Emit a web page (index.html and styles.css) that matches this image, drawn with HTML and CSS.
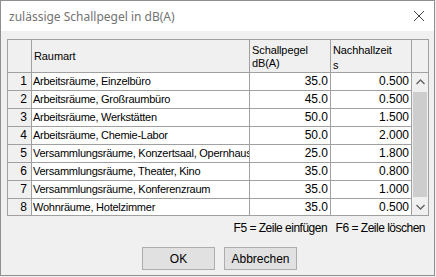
FILE: index.html
```html
<!DOCTYPE html>
<html>
<head>
<meta charset="utf-8">
<link rel="stylesheet" href="styles.css">
</head>
<body>
<div class="window">
  <div class="titlebar">
    <span class="title">zulässige Schallpegel in dB(A)</span>
    <svg class="close" width="12" height="12" viewBox="0 0 12 12"><path d="M1 1L11 11M11 1L1 11" stroke="#444" stroke-width="1" fill="none"/></svg>
  </div>
  <div class="content">
    <div class="grid">
      <div class="head">
        <div class="hc c0"></div>
        <div class="hc c1 mid">Raumart</div>
        <div class="hc c2">Schallpegel<br>dB(A)</div>
        <div class="hc c3">Nachhallzeit<br><span class="unit">s</span></div>
        <div class="hc c4"></div>
      </div>
      <div class="bodyarea">
        <div class="rows">
          <div class="row"><div class="rh">1</div><div class="cell c1">Arbeitsräume, Einzelbüro</div><div class="cell c2 num">35.0</div><div class="cell c3 num">0.500</div></div>
          <div class="row"><div class="rh">2</div><div class="cell c1">Arbeitsräume, Großraumbüro</div><div class="cell c2 num">45.0</div><div class="cell c3 num">0.500</div></div>
          <div class="row"><div class="rh">3</div><div class="cell c1">Arbeitsräume, Werkstätten</div><div class="cell c2 num">50.0</div><div class="cell c3 num">1.500</div></div>
          <div class="row"><div class="rh">4</div><div class="cell c1">Arbeitsräume, Chemie-Labor</div><div class="cell c2 num">50.0</div><div class="cell c3 num">2.000</div></div>
          <div class="row"><div class="rh">5</div><div class="cell c1">Versammlungsräume, Konzertsaal, Opernhaus</div><div class="cell c2 num">25.0</div><div class="cell c3 num">1.800</div></div>
          <div class="row"><div class="rh">6</div><div class="cell c1">Versammlungsräume, Theater, Kino</div><div class="cell c2 num">35.0</div><div class="cell c3 num">0.800</div></div>
          <div class="row"><div class="rh">7</div><div class="cell c1">Versammlungsräume, Konferenzraum</div><div class="cell c2 num">35.0</div><div class="cell c3 num">1.000</div></div>
          <div class="row"><div class="rh">8</div><div class="cell c1">Wohnräume, Hotelzimmer</div><div class="cell c2 num">35.0</div><div class="cell c3 num">0.500</div></div>
        </div>
        <div class="scrollbar">
          <div class="sbtn"><svg width="9" height="6" viewBox="0 0 9 6"><path d="M0.5 5L4.5 1L8.5 5" stroke="#606060" stroke-width="1.3" fill="none"/></svg></div>
          <div class="track"><div class="thumb"></div></div>
          <div class="sbtn"><svg width="9" height="6" viewBox="0 0 9 6"><path d="M0.5 1L4.5 5L8.5 1" stroke="#606060" stroke-width="1.3" fill="none"/></svg></div>
        </div>
      </div>
    </div>
    <div class="hint">F5 = Zeile einfügen&nbsp;&nbsp;&nbsp;F6 = Zeile löschen</div>
    <div class="buttons">
      <button class="btn">OK</button>
      <button class="btn">Abbrechen</button>
    </div>
  </div>
</div>
</body>
</html>
```

FILE: styles.css
```css
html, body {
  margin: 0;
  padding: 0;
  background: #f0f0f0;
}
body {
  width: 436px;
  height: 277px;
  overflow: hidden;
}
.window {
  box-sizing: border-box;
  width: 435px;
  height: 276px;
  border: 1px solid #8f8f8f;
  background: #f0f0f0;
  display: flex;
  flex-direction: column;
}
.titlebar {
  height: 30px;
  background: #ffffff;
  display: flex;
  align-items: center;
  justify-content: space-between;
  padding: 0 9px 0 8px;
  flex: none;
}
.title {
  font-family: "Noto Sans", "Open Sans", sans-serif;
  font-size: 12px;
  color: #737373;
}
.close {
  display: block;
}
.content {
  flex: 1;
  display: flex;
  flex-direction: column;
  padding: 8px 6px 0 6px;
  font-family: "Liberation Sans", Arial, sans-serif;
  font-size: 11px;
  color: #000;
}
.grid {
  box-sizing: border-box;
  width: 422px;
  height: 177px;
  border: 1px solid #a0a0a0;
  background: #f0f0f0;
  display: flex;
  flex-direction: column;
  overflow: hidden;
}
.head {
  display: flex;
  height: 33px;
  flex: none;
}
.hc {
  box-sizing: border-box;
  height: 33px;
  border-right: 1px solid #a0a0a0;
  border-bottom: 1px solid #a0a0a0;
  background: #f0f0f0;
  padding: 4px 0 0 2px;
  line-height: 13px;
  letter-spacing: -0.1px;
}
.hc.mid {
  padding-top: 10px;
}
.unit {
  position: relative;
  top: 2px;
}
.c0 { width: 24px; flex: none; }
.c1 { width: 218px; flex: none; }
.c2 { width: 81px; flex: none; }
.c3 { width: 81px; flex: none; }
.c4 { flex: 1; border-right: none; }
.bodyarea {
  flex: 1;
  display: flex;
  overflow: hidden;
}
.rows {
  display: flex;
  flex-direction: column;
}
.row {
  display: flex;
  height: 18px;
  flex: none;
}
.rh, .cell {
  box-sizing: border-box;
  height: 18px;
  border-right: 1px solid #a0a0a0;
  border-bottom: 1px solid #a0a0a0;
  line-height: 17px;
  white-space: nowrap;
  overflow: hidden;
}
.rh {
  width: 24px;
  background: #f0f0f0;
  text-align: right;
  padding-right: 4px;
  font-size: 12px;
}
.cell {
  background: #ffffff;
  padding: 0 0 0 1px;
  letter-spacing: -0.25px;
}
.cell.num {
  text-align: right;
  padding-right: 2px;
  font-size: 12px;
  letter-spacing: 0;
}
.scrollbar {
  width: 16px;
  flex: none;
  display: flex;
  flex-direction: column;
  background: #f0f0f0;
}
.sbtn {
  height: 17px;
  display: flex;
  align-items: center;
  justify-content: center;
  flex: none;
}
.track {
  flex: 1;
  padding: 2px 0 1px;
  display: flex;
  flex-direction: column;
}
.thumb {
  flex: 1;
  margin: 0 1px;
  background: #cdcdcd;
}
.hint {
  text-align: right;
  padding: 5px 3px 0 0;
  font-size: 12px;
  letter-spacing: -0.5px;
  line-height: 14px;
}
.buttons {
  display: flex;
  justify-content: center;
  gap: 9px;
  margin-top: 12px;
  padding-left: 4px;
}
.btn {
  box-sizing: border-box;
  width: 73px;
  height: 23px;
  background: #e1e1e1;
  border: 1px solid #adadad;
  font-family: "Liberation Sans", Arial, sans-serif;
  font-size: 12px;
  color: #000;
  padding: 0;
  margin: 0;
}
```
